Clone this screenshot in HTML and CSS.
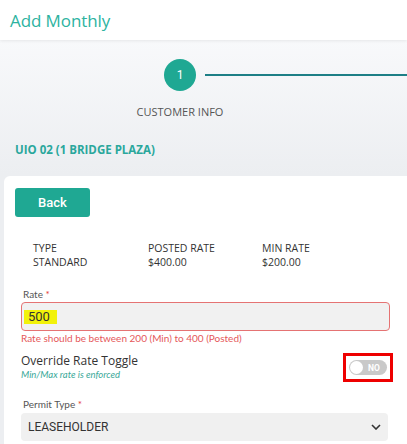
FILE: index.html
```html
<!DOCTYPE html>
<html>
<head>
<meta charset="utf-8">
<link rel="stylesheet" href="styles.css">
</head>
<body>
<header class="topbar">
  <h1 class="title">Add Monthly</h1>
</header>
<main class="page">
  <section class="stepper">
    <div class="step-row">
      <div class="step-circle">1</div>
      <div class="step-line"></div>
    </div>
    <div class="step-label">CUSTOMER INFO</div>
  </section>
  <div class="location">UIO 02 (1 BRIDGE PLAZA)</div>
  <section class="card">
    <button class="back-btn">Back</button>
    <div class="info-grid">
      <div class="info-col"><div>TYPE</div><div>STANDARD</div></div>
      <div class="info-col"><div>POSTED RATE</div><div>$400.00</div></div>
      <div class="info-col"><div>MIN RATE</div><div>$200.00</div></div>
    </div>
    <div class="field">
      <label class="field-label">Rate <span class="req">*</span></label>
      <div class="input error-input"><span class="hl">500</span></div>
      <div class="error-text">Rate should be between 200 (Min) to 400 (Posted)</div>
    </div>
    <div class="override-row">
      <div class="override-text">
        <div class="override-title">Override Rate Toggle</div>
        <div class="override-sub">Min/Max rate is enforced</div>
      </div>
      <div class="annot">
        <div class="toggle"><span class="knob"></span><span class="toggle-text">NO</span></div>
      </div>
    </div>
    <div class="field permit">
      <label class="field-label">Permit Type <span class="req">*</span></label>
      <div class="select">
        <span>LEASEHOLDER</span>
        <svg class="chev" width="10" height="6" viewBox="0 0 10 6"><path d="M1 1l4 4 4-4" fill="none" stroke="#333" stroke-width="1.6"/></svg>
      </div>
    </div>
  </section>
</main>
</body>
</html>
```
FILE: styles.css
```css
* { box-sizing: border-box; }
html, body { margin: 0; padding: 0; }
body {
  font-family: "Open Sans", "Noto Sans", sans-serif;
  background: linear-gradient(#f8f9fb 40px, #eceef1 175px);
  width: 407px;
  height: 444px;
  overflow: hidden;
}
.topbar {
  height: 40px;
  background: #fff;
  box-shadow: 0 1px 3px rgba(0,0,0,0.08);
  display: flex;
  align-items: center;
  padding-left: 10px;
  position: relative;
}
.title {
  margin: 0;
  font-weight: 400;
  font-size: 17px;
  color: #2db39f;
  letter-spacing: -0.1px;
}
.stepper { padding-top: 19px; }
.step-row { display: flex; align-items: center; }
.step-circle {
  margin-left: 164px;
  width: 32px; height: 32px;
  border-radius: 50%;
  background: #1fa893;
  color: #fff;
  font-size: 12px;
  display: flex; align-items: center; justify-content: center;
  font-family: Roboto, sans-serif;
}
.step-line {
  flex: 1;
  margin-left: 9px;
  height: 2px;
  background: #1d7f86;
}
.step-label {
  width: 120px;
  margin-left: 120px;
  margin-top: 13px;
  text-align: center;
  font-size: 11px;
  line-height: 16px;
  color: #555;
}
.location {
  margin: 22px 0 0 15px;
  font-size: 11.5px;
  line-height: 16px;
  font-weight: 700;
  color: #2aa79c;
}
.card {
  margin: 18px 0 0 4px;
  background: #fff;
  border-top-left-radius: 6px;
  padding: 12px 14px 0 11px;
  height: 268px;
}
.back-btn {
  width: 75px; height: 29px;
  border: none;
  border-radius: 3px;
  background: #1fa893;
  color: #fff;
  font-family: Roboto, sans-serif;
  font-weight: 500;
  font-size: 13px;
  padding: 0;
}
.info-grid {
  display: grid;
  grid-template-columns: 115px 114px 100px;
  padding-left: 18px;
  margin-top: 24px;
  font-size: 10.5px;
  line-height: 14px;
  color: #333;
}
.field { padding-left: 6px; }
.field-label {
  display: block;
  font-family: Lato, sans-serif;
  font-size: 10px;
  line-height: 13px;
  color: #555;
  padding-left: 2px;
  margin-top: 19px;
}
.req { color: #e53935; }
.input {
  margin-top: 1px;
  margin-right: 3px;
  height: 29px;
  border: 1px solid #e57373;
  border-radius: 4px;
  background: #f1f1f1;
  display: flex; align-items: center;
  padding-left: 2px;
}
.hl {
  background: #f2f20a;
  font-family: Roboto, sans-serif;
  font-size: 13px;
  color: #333;
  padding: 0 7px 0 4px;
  line-height: 14px;
}
.error-text {
  font-family: Lato, sans-serif;
  font-size: 10px;
  line-height: 13px;
  color: #e5585a;
  margin-top: 1px;
}
.override-row {
  display: flex;
  justify-content: space-between;
  align-items: flex-start;
  padding-left: 6px;
  margin-top: 8px;
}
.override-title {
  font-size: 12px;
  line-height: 15px;
  color: #333;
}
.override-sub {
  font-family: Lato, sans-serif;
  font-style: italic;
  font-size: 9.5px;
  line-height: 12px;
  color: #3aa898;
  margin-top: 1px;
}
.annot {
  width: 50px; height: 29px;
  border: 3px solid #ee0000;
  display: flex; align-items: center; justify-content: center;
}
.toggle {
  width: 38px; height: 15px;
  border-radius: 8px;
  background: #c9c9c9;
  display: flex; align-items: center;
  padding-left: 1px;
}
.knob {
  width: 13px; height: 13px;
  border-radius: 50%;
  background: #fff;
}
.toggle-text {
  margin-left: 5px;
  font-family: Roboto, sans-serif;
  font-weight: 700;
  font-size: 8.5px;
  color: #fff;
}
.permit .field-label { margin-top: 16px; }
.select {
  margin-top: 2px;
  height: 28px;
  border-radius: 4px;
  background: #f0f0f0;
  display: flex; align-items: center; justify-content: space-between;
  padding: 0 7px 0 7px;
  font-family: Roboto, sans-serif;
  font-size: 12px;
  color: #333;
  margin-right: 5px;
}
```
